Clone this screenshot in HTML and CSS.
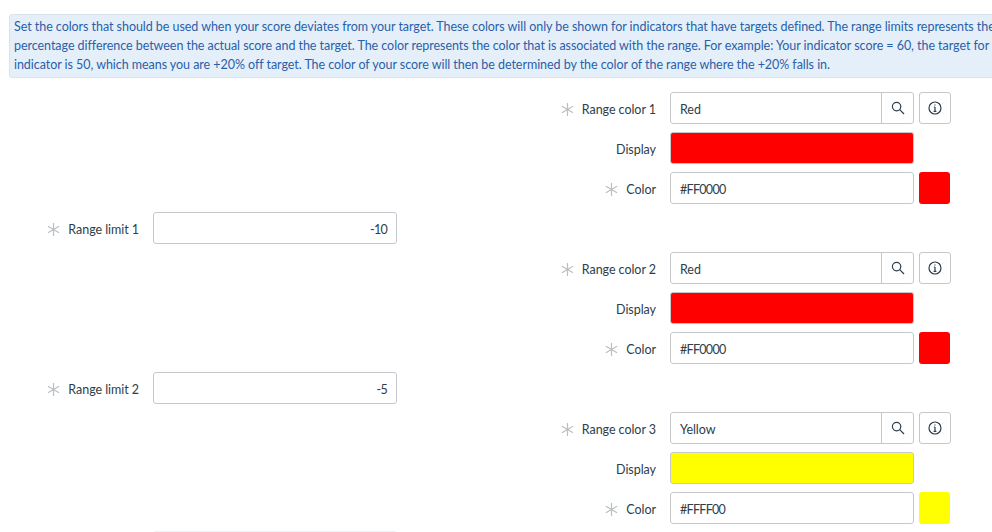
FILE: index.html
```html
<!DOCTYPE html>
<html lang="en">
<head>
<meta charset="utf-8">
<title>Range colors</title>
<link rel="stylesheet" href="styles.css">
</head>
<body>
<main class="page">
  <div class="notice">
    <p class="notice-line">Set the colors that should be used when your score deviates from your target. These colors will only be shown for indicators that have targets defined. The range limits represents the</p>
    <p class="notice-line">percentage difference between the actual score and the target. The color represents the color that is associated with the range. For example: Your indicator score = 60, the target for your</p>
    <p class="notice-line">indicator is 50, which means you are +20% off target. The color of your score will then be determined by the color of the range where the +20% falls in.</p>
  </div>
  <div class="form">
    <div class="row">
      <div class="label label-right"><svg class="req" viewBox="0 0 14 14"><path d="M7 0v14M1 3.5l12 7M1 10.5l12-7"/></svg>Range color 1</div>
      <div class="field field-right">Red<span class="lookup"><svg class="icon" viewBox="0 0 14 14"><circle cx="5.6" cy="5.6" r="4.2"/><path d="M8.7 8.7 13 13"/></svg></span></div>
      <div class="info"><svg class="icon" viewBox="0 0 14 14"><circle cx="7" cy="7" r="6"/><path d="M7 6v4.4M5.6 10.4h2.8M5.9 6H7M7 3.4v1.2"/></svg></div>
    </div>
    <div class="row">
      <div class="label label-right">Display</div>
      <div class="field field-right display red"></div>
    </div>
    <div class="row">
      <div class="label label-right"><svg class="req" viewBox="0 0 14 14"><path d="M7 0v14M1 3.5l12 7M1 10.5l12-7"/></svg>Color</div>
      <div class="field field-right numeric">#FF0000</div>
      <div class="swatch red"></div>
    </div>
    <div class="row">
      <div class="label label-left"><svg class="req" viewBox="0 0 14 14"><path d="M7 0v14M1 3.5l12 7M1 10.5l12-7"/></svg>Range limit 1</div>
      <div class="field field-left number numeric">-10</div>
    </div>
    <div class="row">
      <div class="label label-right"><svg class="req" viewBox="0 0 14 14"><path d="M7 0v14M1 3.5l12 7M1 10.5l12-7"/></svg>Range color 2</div>
      <div class="field field-right">Red<span class="lookup"><svg class="icon" viewBox="0 0 14 14"><circle cx="5.6" cy="5.6" r="4.2"/><path d="M8.7 8.7 13 13"/></svg></span></div>
      <div class="info"><svg class="icon" viewBox="0 0 14 14"><circle cx="7" cy="7" r="6"/><path d="M7 6v4.4M5.6 10.4h2.8M5.9 6H7M7 3.4v1.2"/></svg></div>
    </div>
    <div class="row">
      <div class="label label-right">Display</div>
      <div class="field field-right display red"></div>
    </div>
    <div class="row">
      <div class="label label-right"><svg class="req" viewBox="0 0 14 14"><path d="M7 0v14M1 3.5l12 7M1 10.5l12-7"/></svg>Color</div>
      <div class="field field-right numeric">#FF0000</div>
      <div class="swatch red"></div>
    </div>
    <div class="row">
      <div class="label label-left"><svg class="req" viewBox="0 0 14 14"><path d="M7 0v14M1 3.5l12 7M1 10.5l12-7"/></svg>Range limit 2</div>
      <div class="field field-left number numeric">-5</div>
    </div>
    <div class="row">
      <div class="label label-right"><svg class="req" viewBox="0 0 14 14"><path d="M7 0v14M1 3.5l12 7M1 10.5l12-7"/></svg>Range color 3</div>
      <div class="field field-right">Yellow<span class="lookup"><svg class="icon" viewBox="0 0 14 14"><circle cx="5.6" cy="5.6" r="4.2"/><path d="M8.7 8.7 13 13"/></svg></span></div>
      <div class="info"><svg class="icon" viewBox="0 0 14 14"><circle cx="7" cy="7" r="6"/><path d="M7 6v4.4M5.6 10.4h2.8M5.9 6H7M7 3.4v1.2"/></svg></div>
    </div>
    <div class="row">
      <div class="label label-right">Display</div>
      <div class="field field-right display yellow"></div>
    </div>
    <div class="row">
      <div class="label label-right"><svg class="req" viewBox="0 0 14 14"><path d="M7 0v14M1 3.5l12 7M1 10.5l12-7"/></svg>Color</div>
      <div class="field field-right numeric">#FFFF00</div>
      <div class="swatch yellow"></div>
    </div>
    <div class="row">
      <div class="field field-left number edge"></div>
    </div>
  </div>
</main>
</body>
</html>
```
FILE: styles.css
```css
html, body {
  margin: 0;
  height: 532px;
  overflow: hidden;
  background: #fff;
}
.page {
  width: 992px;
  height: 532px;
  overflow: hidden;
  padding-top: 14px;
  box-sizing: border-box;
  font-family: Lato, sans-serif;
  font-size: 12.5px;
  letter-spacing: -0.05px;
  color: #2e3d49;
}
.notice {
  margin: 0 0 14px 9px;
  width: 1100px;
  height: 64px;
  box-sizing: border-box;
  padding: 2px 4px;
  background: #e5effa;
  border: 1px solid #d9e3ee;
  border-radius: 3px;
  color: #2a5fa8;
  line-height: 19px;
}
.notice-line {
  margin: 0;
  white-space: nowrap;
}
.form {
  display: flex;
  flex-direction: column;
  row-gap: 8px;
  margin-left: 9px;
}
.row {
  display: grid;
  grid-template-columns: 130px 244px 245px 244px 37px;
  column-gap: 14px;
  height: 32px;
  flex: none;
}
.row > * {
  box-sizing: border-box;
}
.label {
  display: flex;
  align-items: center;
  justify-content: flex-end;
  padding-top: 2px;
  white-space: nowrap;
}
.label-left { grid-column: 1; }
.label-right { grid-column: 3; }
.field {
  position: relative;
  display: flex;
  align-items: center;
  padding: 2px 9px 0;
  background: #fff;
  border: 1px solid #c4c8cc;
  border-radius: 3px;
}
.field-left { grid-column: 2; }
.field-right { grid-column: 4; }
.number { justify-content: flex-end; }
.numeric { letter-spacing: -0.7px; }
.req {
  width: 13px;
  height: 13px;
  margin-right: 8px;
  fill: none;
  stroke: #b9bfc4;
  stroke-width: 1.3;
}
.lookup {
  position: absolute;
  top: 0;
  right: 0;
  bottom: 0;
  width: 31px;
  display: flex;
  align-items: center;
  justify-content: center;
  border-left: 1px solid #c4c8cc;
}
.icon {
  width: 14px;
  height: 14px;
  fill: none;
  stroke: #2e3d49;
  stroke-width: 1.2;
}
.info {
  grid-column: 5;
  margin-left: -9px;
  width: 32px;
  display: flex;
  align-items: center;
  justify-content: center;
  border: 1px solid #c4c8cc;
  border-radius: 3px;
}
.swatch {
  grid-column: 5;
  margin-left: -9px;
  width: 31px;
  border-radius: 3px;
}
.display { border-color: #c9c9c9; }
.red { background: #f00; }
.yellow { background: #ff0; }
.edge { box-shadow: 0 -1px 1px #eef0f1; }
```
